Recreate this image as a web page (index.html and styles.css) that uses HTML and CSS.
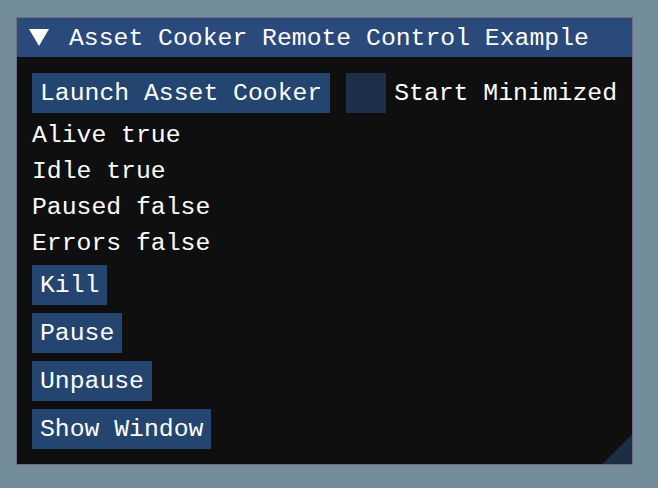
FILE: index.html
```html
<!DOCTYPE html>
<html>
<head>
<meta charset="utf-8">
<link rel="stylesheet" href="styles.css">
</head>
<body>
<div class="window">
  <div class="titlebar">
    <svg class="arrow" width="20" height="17" viewBox="0 0 20 17"><polygon points="0,0 20,0 10,17" fill="#ffffff"/></svg>
    <span class="title">Asset Cooker Remote Control Example</span>
  </div>
  <div class="content">
    <div class="row">
      <div class="btn">Launch Asset Cooker</div>
      <div class="check"></div>
      <span class="label">Start Minimized</span>
    </div>
    <div class="text">Alive true</div>
    <div class="text">Idle true</div>
    <div class="text">Paused false</div>
    <div class="text">Errors false</div>
    <div class="btn">Kill</div>
    <div class="btn">Pause</div>
    <div class="btn">Unpause</div>
    <div class="btn">Show Window</div>
  </div>
  <div class="grip"></div>
</div>
</body>
</html>
```

FILE: styles.css
```css
html, body {
  margin: 0;
  padding: 0;
}
body {
  background: #738c99;
  width: 658px;
  height: 488px;
  padding: 17px 0 0 16px;
  box-sizing: border-box;
  font-family: "Liberation Mono", "DejaVu Sans Mono", monospace;
  font-size: 24.75px;
  color: #ffffff;
}
.window {
  position: relative;
  width: 617px;
  height: 448px;
  box-sizing: border-box;
  border: 1px solid #6d6f80;
  background: #0f0f0f;
  overflow: hidden;
}
.titlebar {
  height: 39px;
  background: #294a7a;
  display: flex;
  align-items: center;
  margin-top: -1px;
  padding-top: 1px;
}
.arrow {
  margin-left: 12px;
  margin-right: 20px;
}
.title {
  line-height: 28px;
  white-space: pre;
}
.content {
  padding: 16px 0 0 15px;
  display: flex;
  flex-direction: column;
  align-items: flex-start;
  gap: 8px;
}
.row {
  display: flex;
  align-items: center;
}
.btn {
  background: #234570;
  height: 40px;
  line-height: 40px;
  padding: 0 8px;
  white-space: pre;
}
.check {
  width: 40px;
  height: 40px;
  background: #1d2f49;
  margin-left: 16px;
  margin-right: 8px;
}
.label {
  line-height: 40px;
  white-space: pre;
}
.text {
  height: 28px;
  line-height: 28px;
  white-space: pre;
}
.grip {
  position: absolute;
  right: 0;
  bottom: 0;
  width: 30px;
  height: 30px;
  background: linear-gradient(135deg, transparent 50%, #1b2c43 50%);
}
```
